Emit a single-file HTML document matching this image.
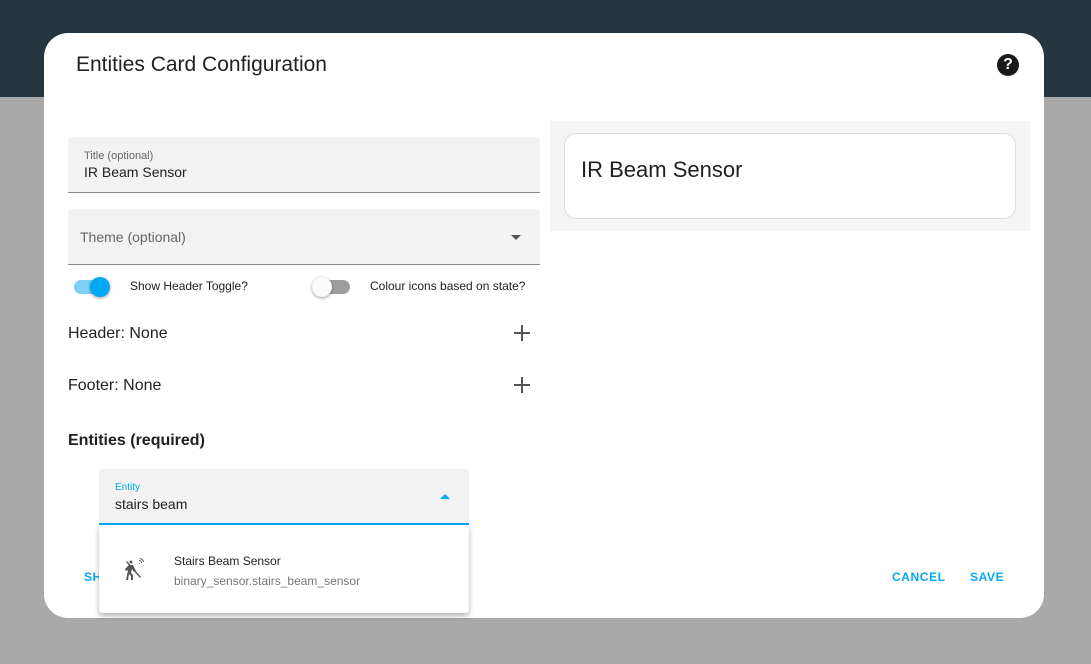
<!DOCTYPE html>
<html><head><style>
*{box-sizing:border-box;margin:0;padding:0}
body{width:1091px;height:664px;background:#a9a9a9;font-family:"Liberation Sans",Roboto,sans-serif;position:relative;overflow:hidden;color:#212121}
.top{position:absolute;left:0;top:0;width:1091px;height:97px;background:#263640}
.dlg{position:absolute;left:44px;top:33px;width:1000px;height:585px;background:#fff;border-radius:24px}
.a{position:absolute}
.field{position:absolute;background:#f2f2f2;border-radius:4px 4px 0 0;border-bottom:1px solid #8a8a8a}
.tg{position:absolute;width:34px;height:14px;border-radius:7px}
.knob{position:absolute;width:20px;height:20px;border-radius:50%;top:-3px;box-shadow:0 1px 3px rgba(0,0,0,.4)}
.plus{position:absolute;width:16px;height:16px}
.plus:before{content:"";position:absolute;left:7px;top:0;width:1.6px;height:16px;background:#555}
.plus:after{content:"";position:absolute;top:7px;left:0;height:1.6px;width:16px;background:#555}
.btn{position:absolute;color:#03a9f4;font-size:12px;font-weight:bold;letter-spacing:0.6px}
</style></head><body>
<div class="top"></div>
<div class="dlg">
<div class="a" style="left:32px;top:20px;font-size:21px;color:#212121">Entities Card Configuration</div>
<div class="a" style="left:953px;top:21px;width:22px;height:22px;border-radius:50%;background:#1a1a1a;color:#fff;font-size:16px;font-weight:bold;text-align:center;line-height:22px">?</div>

<div class="field" style="left:24px;top:104px;width:472px;height:56px">
<div class="a" style="left:16px;top:13px;font-size:11px;color:#666">Title (optional)</div>
<div class="a" style="left:16px;top:27px;font-size:14px">IR Beam Sensor</div></div>
<div class="field" style="left:24px;top:176px;width:472px;height:56px">
<div class="a" style="left:12px;top:20px;font-size:14px;color:#666">Theme (optional)</div>
<div class="a" style="left:443px;top:26px;border-left:5px solid transparent;border-right:5px solid transparent;border-top:5px solid #555"></div></div>

<div class="tg" style="left:30px;top:247px;background:#7fd0f7"><div class="knob" style="left:16px;background:#03a9f4"></div></div>
<div class="a" style="left:86px;top:246px;font-size:12px">Show Header Toggle?</div>
<div class="tg" style="left:272px;top:247px;background:#9e9e9e"><div class="knob" style="left:-4px;background:#fafafa"></div></div>
<div class="a" style="left:326px;top:246px;font-size:12px">Colour icons based on state?</div>

<div class="a" style="left:24px;top:292px;font-size:16px">Header: None</div>
<div class="plus" style="left:470px;top:292px"></div>
<div class="a" style="left:24px;top:344px;font-size:16px">Footer: None</div>
<div class="plus" style="left:470px;top:344px"></div>
<div class="a" style="left:24px;top:399px;font-size:16px;font-weight:bold">Entities (required)</div>

<div class="field" style="left:55px;top:436px;width:370px;height:56px;border-bottom:2px solid #03a9f4">
<div class="a" style="left:16px;top:13px;font-size:10px;color:#03a9f4">Entity</div>
<div class="a" style="left:16px;top:27px;font-size:14px">stairs beam</div>
<div class="a" style="left:341px;top:25px;border-left:5px solid transparent;border-right:5px solid transparent;border-bottom:5px solid #03a9f4"></div></div>

<div class="btn" style="left:40px;top:537px">SH</div>
<div class="btn" style="left:848px;top:537px">CANCEL</div>
<div class="btn" style="left:926px;top:537px">SAVE</div>

<div class="a" style="left:506px;top:88px;width:480px;height:110px;background:#f5f5f5"></div>
<div class="a" style="left:520px;top:100px;width:452px;height:86px;background:#fff;border:1px solid #ddd;border-radius:12px">
<div class="a" style="left:16px;top:23px;font-size:22px">IR Beam Sensor</div></div>

<div class="a" style="left:55px;top:492px;width:370px;height:88px;background:#fff;box-shadow:0 3px 6px rgba(0,0,0,.3);border-radius:0 0 4px 4px">
<svg class="a" style="left:24px;top:32px" width="24" height="24" viewBox="0 0 24 24"><g fill="#555"><circle cx="8" cy="5" r="1.5"/><path d="M6 8h4l3 6-2 1-2-3-1 4 2 2v5H8v-4l-2-2-1 6H3l2-10-2 1-1-2z"/><path d="M4 4l14 16-1 1L3 5z"/><path d="M16 3a3 3 0 013 3h-1a2 2 0 00-2-2zM16 6a1 1 0 011 1h-1zM17 1a5 5 0 014 4h-1a4 4 0 00-3-3z"/></g></svg>
<div class="a" style="left:75px;top:29px;font-size:12px">Stairs Beam Sensor</div>
<div class="a" style="left:75px;top:49px;font-size:12px;color:#757575">binary_sensor.stairs_beam_sensor</div>
</div>
</div>
</body></html>
